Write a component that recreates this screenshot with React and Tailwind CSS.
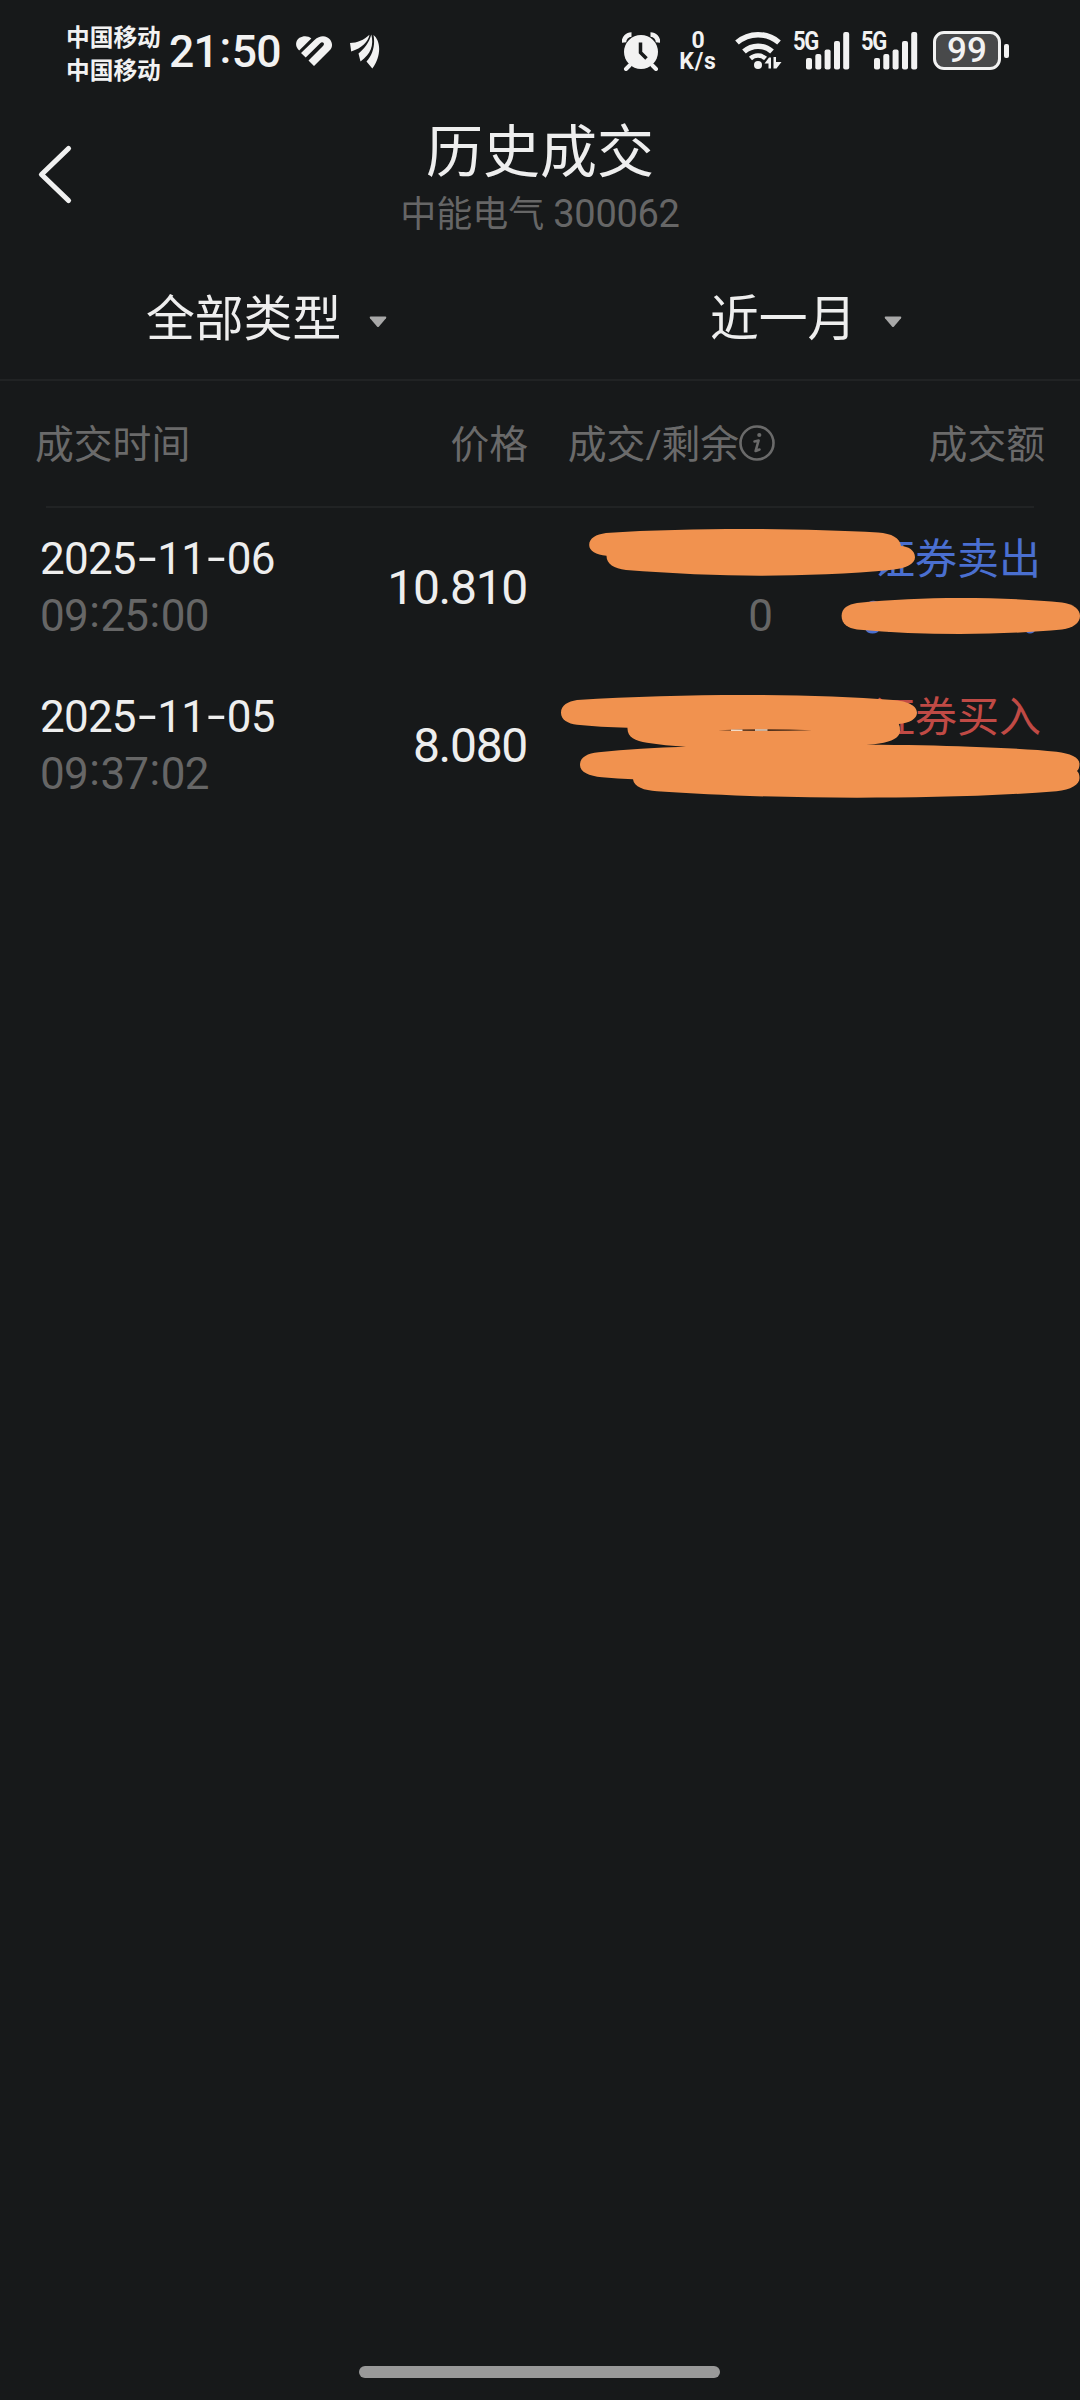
const FILTERS = [
  { label: '全部类型', pad: 'pl-[146px]', width: 'w-[540px]' },
  { label: '近一月', pad: 'pl-[170px]', width: 'w-[540px]' },
];

const TRADES = [
  { date: '2025-11-06', time: '09:25:00', price: '10.810', left: '0', side: '证券卖出', sideColor: 'text-[#4a6fd0]' },
  { date: '2025-11-05', time: '09:37:02', price: '8.080', left: '', side: '证券买入', sideColor: 'text-[#c04a45]' },
];

const GRID = 'grid grid-cols-[328px_200px_246px_1fr]';

// Hyphens and colons get a wider, raised cell than the font gives them
function Digits({ value }) {
  return value.split('').map((c, i) => {
    if (c === '-') return <span key={i} className="inline-block w-[21.6px] text-center"><span className="inline-block scale-x-[1.5] relative -top-[1px]">-</span></span>;
    if (c === ':') return <span key={i} className="inline-block w-[12.5px] text-center relative -top-[4px]">:</span>;
    return <span key={i}>{c}</span>;
  });
}

function SignalBars() {
  return (
    <div className="relative w-[57px] h-[38px]">
      <span className="absolute left-0 top-0 text-[25px] leading-[20px] font-bold tracking-[-1.5px] origin-left scale-x-[0.88]">5G</span>
      <svg className="absolute left-0 top-0" width="57" height="38" viewBox="0 0 57 38" fill="#f2f2f2">
        <rect x="13" y="26" width="6" height="11.5" rx="2" />
        <rect x="22.3" y="22" width="6" height="15.5" rx="2" />
        <rect x="31.6" y="17.5" width="6" height="20" rx="2" />
        <rect x="41" y="9" width="6" height="28.5" rx="2" />
        <rect x="50.2" y="0" width="6" height="37.5" rx="2" />
      </svg>
    </div>
  );
}

function StatusBar() {
  return (
    <div className="h-[100px] flex items-start text-[#f2f2f2]">
      <div className="ml-[66px] mt-[22px] w-[103px] text-[23.7px] leading-[33px] font-bold">
        <div>中国移动</div>
        <div>中国移动</div>
      </div>
      <div className="mt-[27px] w-[127px] text-[44.5px] leading-[50px] font-medium tracking-[-0.9px] whitespace-nowrap">
        21<span className="inline-block w-[14px] text-center relative -top-[4px]">:</span>50
      </div>
      <svg className="mt-[36px]" width="36" height="30" viewBox="0 0 36 30" fill="#f2f2f2">
        <path d="M3.200 14.500C-1.500 10-.5 4.500 3.500 1.800 7.500-.8 12.500-.2 15.300 2.500z" />
        <path d="M5 17 18.500 4C24-1.500 31-.5 34 3.500 37 7.500 36.500 11.500 33.500 14.500L18 30 12.500 24.500 27 10C29.500 7.500 26.500 5 24.200 7.200L9.700 21.500z" />
      </svg>
      <svg className="ml-[18px] mt-[34px]" width="30" height="35" viewBox="0 0 30 35" fill="#f2f2f2">
        <path d="M0 9C7 9 14 6 19.500.8 18 8 12 14 1.200 17.500z" />
        <path d="M8.500 19.500C14 15 19 9 21.300.5 24 11 21 20 10.500 27.500z" />
        <path d="M23.500 1C31 7 31.500 22 22.300 34.500L16.500 27.500C22.500 21 25.500 11 23.500 1z" />
      </svg>

      <svg className="ml-[242px] mt-[32px]" width="38" height="39" viewBox="0 0 38 39">
        <path d="M2 10.500A7.500 7.500 0 0 1 9.500 2.500M36 10.500A7.500 7.500 0 0 0 28.500 2.500" stroke="#f2f2f2" strokeWidth="4.500" fill="none" />
        <circle cx="19" cy="20" r="17" fill="#f2f2f2" />
        <path d="M7.500 33.500 4 37M30.500 33.500 34 37" stroke="#f2f2f2" strokeWidth="4" strokeLinecap="round" />
        <path d="M18.500 10.500V20.500L24.500 26.500" stroke="#17191a" strokeWidth="3.500" fill="none" />
      </svg>
      <div className="ml-[16px] mt-[30px] w-[44px] text-center text-[23px] font-bold flex flex-col">
        <div className="h-[21px] leading-[21px]">0</div>
        <div className="h-[21px] leading-[21px] tracking-[0.8px]">K/s</div>
      </div>
      <svg className="ml-[15px] mt-[31px]" width="48" height="39" viewBox="0 0 48 39">
        <path d="M2 11.500A32 32 0 0 1 44 11.500" stroke="#f2f2f2" strokeWidth="5.500" fill="none" />
        <path d="M9 20.500A21 21 0 0 1 37 20.500" stroke="#f2f2f2" strokeWidth="5.500" fill="none" />
        <path d="M15.500 27.500A11 11 0 0 1 30.500 27.500" stroke="#f2f2f2" strokeWidth="4.500" fill="none" />
        <circle cx="23" cy="34" r="4" fill="#f2f2f2" />
        <path d="M29.500 32.500 34 26.500H36V37.500H33.500V32.500zM38.500 37.500V26H41V31H46.500L41.500 37.500z" fill="#f2f2f2" />
      </svg>
      <div className="ml-[10px] mt-[32px]"><SignalBars /></div>
      <div className="ml-[11px] mt-[32px]"><SignalBars /></div>
      <div className="ml-[15px] mt-[31px] w-[68px] h-[39px] rounded-[11px] border-[3px] border-[#f2f2f2] bg-[#48494a] flex items-center justify-center text-[35px] leading-[34px] font-medium">
        99
      </div>
      <div className="ml-[3px] mt-[44px] w-[5px] h-[14px] rounded-[2px] bg-[#f2f2f2]" />
    </div>
  );
}

function InfoIcon() {
  return (
    <svg width="36" height="36" viewBox="0 0 36 36" fill="none" stroke="#6a6a6a">
      <circle cx="18" cy="18" r="16.500" strokeWidth="2.600" />
      <circle cx="20.300" cy="10" r="2.100" fill="#6a6a6a" stroke="none" />
      <path d="M15.500 16.500 19.600 15.500 16.600 26 20.500 24.500" strokeWidth="2.600" strokeLinejoin="round" strokeLinecap="round" />
    </svg>
  );
}

// Marker strokes that hide the quantities and amounts
function Redactions() {
  return (
    <svg className="absolute left-0 top-0 pointer-events-none" width="1080" height="316" viewBox="0 508 1080 316">
      <g fill="#4a6fd0">
        <path d="M865 629H880Q878 633.500 872.500 633.500 867 633.500 865 629zM888 630H900V632H888zM1025 629H1036Q1034 633.500 1030 633.500 1026 633.500 1025 629zM869 602Q873 599.500 878 602z" />
      </g>
      <g fill="#f1924f">
        <path d="M589.200 545C589.200 538 596 534.500 606 533C650 530 700 529 743 529C790 529 840 530.500 878 532.500C892 533.500 900 538 901 546C908 546.500 915 550 915 557.300C915 564 906 568.500 892 569.800C850 574 800 575.700 760 575.700C720 575.700 670 573.500 626 570C614 568.500 606.500 564 606.500 555.700C596 555 589.200 551 589.200 545Z" />
        <path d="M841.600 616C841.600 608 848 604.500 857 603C890 599.500 925 598 960 598C1000 598 1035 599.500 1062 602.500C1073 604 1080 609 1080 616C1080 623 1073 628 1062 629.500C1030 632.500 995 634 960 634C925 634 890 632.500 857 629.500C848 628 841.600 624 841.600 616Z" />
        <path d="M561 712.700C561 705 568 701.500 577 700C630 696.500 690 695 743 695C800 695 850 697 893 700C906 701 917 705 917 712.700C917 719 909 723 898.800 724Q900 726 900 730.700C900 739 888 743.500 866.400 744.700C905 744.700 940 745.500 970 746.700C1005 748 1035 749.500 1056.500 751.700C1070 753.500 1079.500 757 1079.500 764Q1079.500 769 1077 771Q1079.500 773 1079.500 778C1079.500 785 1071 789.500 1056.500 791.300C990 796.500 920 797.700 857 797.700C790 797.700 715 795.500 657 791.300C644 790.500 634 787 633 779.300Q618 779 602 777.300C589 776 580 772 580 765C580 757 587 753.500 598.500 752.200Q640 748 686 746.700Q665 745.500 647 742.700C635 741 627 737 627.500 727.700Q600 727 577 724.700C568 723.500 561 720 561 712.700Z" />
      </g>
      <path d="M718 730.300Q740 729.300 765 729.300T812 730.300Q790 731 765 731T718 730.300z" fill="#4a2c18" />
      <path d="M731 730.300H742.500M755 730H767.500" stroke="#f3dcc8" strokeWidth="1.600" />
    </svg>
  );
}

export default function App() {
  return (
    <div className="w-[1080px] h-[2400px] bg-[#17191a] flex flex-col overflow-hidden font-['Roboto','Noto_Sans_CJK_SC',sans-serif]">
      <StatusBar />

      <header className="h-[150px] grid grid-cols-[200px_1fr_200px]">
        <button className="pl-[36px] pt-[43px] self-start" aria-label="返回">
          <svg width="38" height="62" viewBox="0 0 38 62" fill="none" stroke="#f0f0f0" strokeWidth="5.200" strokeLinecap="round" strokeLinejoin="round">
            <path d="M32.500 5.500 5.500 31.500 32.500 57.500" />
          </svg>
        </button>
        <div className="text-center">
          <h1 className="mt-[23px] text-[57px] leading-[60px] text-[#eeeeee]">历史成交</h1>
          <p className="mt-[9px] text-[36px] leading-[44px] text-[#666666]">中能电气 <span className="text-[38px] tracking-[-0.3px]">300062</span></p>
        </div>
      </header>

      <div className="h-[131px] flex border-b-2 border-[#212324]">
        {FILTERS.map((f) => (
          <div key={f.label} className={`${f.width} ${f.pad} flex pt-[42px]`}>
            <span className="text-[48.8px] leading-[56px] text-[#eeeeee]">{f.label}</span>
            <svg className="ml-[28px] mt-[24px]" width="18" height="12" viewBox="0 0 18 12" fill="#a8a8a8">
              <path d="M1.500.5H16.500Q18 .8 17 2.300L10 10.500Q9 11.500 8 10.500L1 2.300Q0 .8 1.500.5z" />
            </svg>
          </div>
        ))}
      </div>

      <div className={`${GRID} h-[125px] pt-[40px] text-[38.8px] leading-[48px] text-[#6a6a6a]`}>
        <div className="pl-[35px]">成交时间</div>
        <div className="text-right">价格</div>
        <div className="flex justify-end whitespace-nowrap -mr-[1px]">
          成交/剩余
          <span className="mt-[4px]"><InfoIcon /></span>
        </div>
        <div className="text-right pr-[35px]">成交额</div>
      </div>
      <div className="h-[2px] mx-[46px] bg-[#212324]" />

      <div className="relative">
        {TRADES.map((t) => (
          <div key={t.date} className={`${GRID} h-[158px] text-[44px] leading-[57px]`}>
            <div className="pl-[40px] pt-[23px] tracking-[-0.8px]">
              <div className="text-[#eeeeee]"><Digits value={t.date} /></div>
              <div className="text-[#666666]"><Digits value={t.time} /></div>
            </div>
            <div className="pt-[51px] pr-[1px] text-right text-[48px] tracking-[-1.3px] text-[#eeeeee]">{t.price}</div>
            <div className="pt-[80px] pr-px text-right text-[#666666]">{t.left}</div>
            <div className={`pt-[23px] pr-[39px] text-right text-[42px] ${t.sideColor}`}>{t.side}</div>
          </div>
        ))}
        <Redactions />
      </div>

      <div className="mt-auto mb-[22px] ml-[359px] w-[361px] h-[12px] rounded-full bg-[#999999]" />
    </div>
  );
}
